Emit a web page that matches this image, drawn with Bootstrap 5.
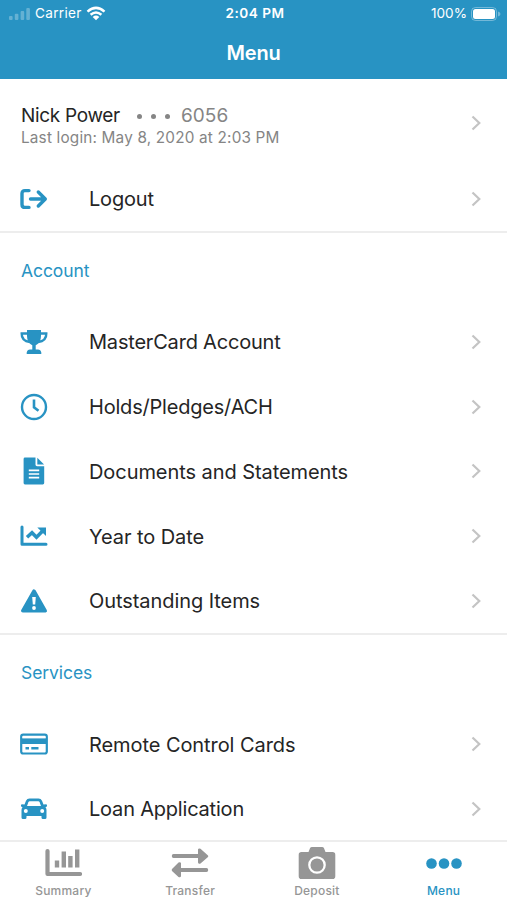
<!DOCTYPE html>
<html lang="en">
<head>
<meta charset="utf-8">
<meta name="viewport" content="width=device-width, initial-scale=1">
<title>Menu</title>
<link href="https://cdn.jsdelivr.net/npm/bootstrap@5.3.0/dist/css/bootstrap.min.css" rel="stylesheet">
<style>
:root{--brand:#2893c3}
body{font-family:Inter,"Liberation Sans",sans-serif;color:#252525;height:900px;width:507px;background:#fff}
svg{display:block;flex:none}
.brand-bg{background:var(--brand);color:#fff;height:79px}
.statusbar{height:27px;font-size:13.6px;line-height:27px;padding:0 6px 0 9px}
.statusbar>div{flex:1 1 0}
.carrier{letter-spacing:.3px}
.clock{font-weight:600;letter-spacing:.5px}
.screen-title{font-size:20px;font-weight:600;line-height:52px;letter-spacing:-.15px}
.row-item{height:64.8px;padding:0 26.5px 0 20px;font-size:20px;letter-spacing:-.2px;color:inherit;text-decoration:none}
.row-item .glyph{width:69px;color:var(--brand)}
.row-item .label{padding-top:1px}
.row-item .wide{letter-spacing:-.07px}
.profile{height:87px;padding-left:21px}
.logout{height:65px}
.user{font-size:19px;line-height:22px;letter-spacing:-.32px;margin-top:7px}
.muted{color:#858585}
.acct{letter-spacing:.1px}
.login-time{font-size:15.3px;line-height:21px;color:#858585;letter-spacing:.19px}
.dots{gap:9px;margin:2px 11px 0 17px}
.dots i{width:5px;height:5px;border-radius:50%;background:#858585}
.group{border-bottom:2.5px solid #ededed}
.group-title{height:76.4px;line-height:76px;padding-left:21px;font-size:17.5px;letter-spacing:-.08px;color:var(--brand)}
.tabs{height:60px;border-top:2px solid #ededed;background:#fff}
.tabs a{flex:1 1 0;color:#969696;text-decoration:none;font-size:12px;font-weight:500;line-height:16px;letter-spacing:.22px;padding-top:1px}
.tabs a.on{color:var(--brand)}
</style>
</head>
<body class="d-flex flex-column overflow-hidden">
<svg width="0" height="0" class="position-absolute"><symbol id="chev" viewBox="0 0 10 16"><path d="M1.5 1.5L8.3 8L1.5 14.5" fill="none" stroke="#c4c4c4" stroke-width="2.2"/></symbol></svg>
<header class="brand-bg flex-shrink-0">
  <div class="statusbar d-flex align-items-center">
    <div class="d-flex align-items-center">
      <svg width="22" height="14" viewBox="0 0 22 14" fill="#fff" opacity=".28"><rect y="9" width="3.6" height="4" rx="1"/><rect x="5.8" y="6.8" width="3.6" height="6.2" rx="1"/><rect x="11.6" y="4" width="3.6" height="9" rx="1"/><rect x="17.3" y="1" width="3.6" height="12" rx="1"/></svg>
      <span class="carrier ms-1">Carrier</span>
      <svg class="ms-1" width="20" height="15" viewBox="0 0 20 15"><g fill="none" stroke="#fff" stroke-width="2.5"><path d="M1.5 5.6Q10 -1.9 18.5 5.6"/><path d="M4.6 8.8Q10 4.1 15.4 8.8"/></g><path d="M6.7 10.9Q10 8.1 13.3 10.9L10 14.3Z" fill="#fff"/></svg>
    </div>
    <div class="clock text-center">2:04 PM</div>
    <div class="d-flex align-items-center justify-content-end">
      <span>100%</span>
      <svg class="ms-1" width="30" height="14" viewBox="0 0 30 14"><rect x=".5" y=".5" width="25" height="13" rx="4" fill="none" stroke="#fff" opacity=".35"/><rect x="2" y="2" width="22" height="10" rx="2.5" fill="#fff"/><path d="M27 4.6Q29.5 5.3 29.5 7T27 9.4Z" fill="#fff" opacity=".35"/></svg>
    </div>
  </div>
  <h1 class="screen-title text-center m-0">Menu</h1>
</header>
<main class="flex-grow-1 overflow-hidden">
  <section class="group">
    <a href="#" class="row-item profile d-flex align-items-center justify-content-between">
      <div>
        <div class="user d-flex align-items-center"><span>Nick Power</span><span class="dots d-flex"><i></i><i></i><i></i></span><span class="muted acct">6056</span></div>
        <div class="login-time">Last login: May 8, 2020 at 2:03 PM</div>
      </div>
      <svg width="10" height="16"><use href="#chev"/></svg>
    </a>
    <a href="#" class="row-item logout d-flex align-items-center">
      <span class="glyph"><svg width="28" height="28" viewBox="0 0 28 28" fill="none" stroke="currentColor" stroke-width="3.4" stroke-linecap="round" stroke-linejoin="round"><path d="M9 5.6H5Q2 5.6 2 8.600V19.400Q2 22.400 5 22.400H9"/><path d="M10.500 14H25M18.300 7L25.300 14L18.300 21"/></svg></span>
      <span class="label flex-grow-1">Logout</span><svg width="10" height="16"><use href="#chev"/></svg>
    </a>
  </section>
  <section class="group">
    <h2 class="group-title m-0 fw-normal">Account</h2>
    <a href="#" class="row-item d-flex align-items-center">
      <span class="glyph"><svg width="28" height="28" viewBox="0 0 28 28"><path d="M7 2H21V8Q21 14.5 15.7 17.2V21.5H18Q20.7 21.5 21.3 24.5V26H6.7V24.5Q7.3 21.5 10 21.5H12.3V17.2Q7 14.5 7 8Z" fill="currentColor"/><path d="M7.5 5.5H1.7Q1.4 13 10 14M20.5 5.5H26.3Q26.6 13 18 14" fill="none" stroke="currentColor" stroke-width="2.4"/></svg></span>
      <span class="label flex-grow-1">MasterCard Account</span><svg width="10" height="16"><use href="#chev"/></svg>
    </a>
    <a href="#" class="row-item d-flex align-items-center">
      <span class="glyph"><svg width="28" height="28" viewBox="0 0 28 28" fill="none" stroke="currentColor" stroke-width="2.4"><circle cx="14" cy="14" r="12"/><path d="M14 6.5V14.4L18.5 17.8" stroke-width="2.6"/></svg></span>
      <span class="label flex-grow-1">Holds/Pledges/ACH</span><svg width="10" height="16"><use href="#chev"/></svg>
    </a>
    <a href="#" class="row-item d-flex align-items-center">
      <span class="glyph"><svg width="28" height="28" viewBox="0 0 28 28" fill="currentColor"><path d="M5 .6H15.5V7.8Q15.5 9.2 17 9.2H24.2V26Q24.2 27.4 22.8 27.4H5Q3.6 27.4 3.6 26V2Q3.6 .6 5 .6Z"/><path d="M17.3 .7L24.1 7.5H17.3Z"/><path d="M8.8 13.3H19.2M8.8 17H19.2M8.8 20.7H19.2" stroke="#fff" stroke-width="1.7"/></svg></span>
      <span class="label wide flex-grow-1">Documents and Statements</span><svg width="10" height="16"><use href="#chev"/></svg>
    </a>
    <a href="#" class="row-item d-flex align-items-center">
      <span class="glyph"><svg width="28" height="28" viewBox="0 0 28 28" fill="none" stroke="currentColor" stroke-width="3" stroke-linecap="round"><path d="M2 5V22.2H26" stroke-linejoin="round"/><path d="M7 15.2L12 10.7L16.5 15.2L22.6 9" stroke-width="3.5" stroke-linecap="butt"/><path d="M17.3 5.400H26V14Z" fill="currentColor" stroke="none"/></svg></span>
      <span class="label wide flex-grow-1">Year to Date</span><svg width="10" height="16"><use href="#chev"/></svg>
    </a>
    <a href="#" class="row-item d-flex align-items-center">
      <span class="glyph"><svg width="28" height="28" viewBox="0 0 28 28"><path d="M14 4.2L25.2 23.8H2.8Z" fill="currentColor" stroke="currentColor" stroke-width="3.6" stroke-linejoin="round"/><path d="M12.2 10H15.8L15.2 17.5H12.8Z" fill="#fff"/><circle cx="14" cy="21" r="1.9" fill="#fff"/></svg></span>
      <span class="label wide flex-grow-1">Outstanding Items</span><svg width="10" height="16"><use href="#chev"/></svg>
    </a>
  </section>
  <section>
    <h2 class="group-title m-0 fw-normal">Services</h2>
    <a href="#" class="row-item d-flex align-items-center">
      <span class="glyph"><svg width="28" height="28" viewBox="0 0 28 28"><rect x="1.2" y="4.7" width="25.6" height="18.8" rx="2" fill="none" stroke="currentColor" stroke-width="2.2"/><path d="M2 8.4H26V14H2Z" fill="currentColor"/><path d="M2 7.2H26" stroke="#fff" stroke-width="1" opacity=".55"/><path d="M5.5 18.3H9M11.3 18.3H18.5" stroke="currentColor" stroke-width="2.4"/></svg></span>
      <span class="label wide flex-grow-1">Remote Control Cards</span><svg width="10" height="16"><use href="#chev"/></svg>
    </a>
    <a href="#" class="row-item d-flex align-items-center">
      <span class="glyph"><svg width="28" height="28" viewBox="0 0 28 28"><path d="M9.5 3.5H18.5Q21 3.5 22 5.8L23.5 9.6L26.2 9.3Q27.6 9.6 26.9 11.5L25.5 12.2Q26.5 13.3 26.5 15V22.5Q26.5 24 25 24H23Q21.5 24 21.5 22.5V21H6.5V22.5Q6.5 24 5 24H3Q1.5 24 1.5 22.5V15Q1.5 13.3 2.5 12.2L1.1 11.5Q.4 9.6 1.8 9.3L4.5 9.6L6 5.8Q7 3.5 9.5 3.5Z" fill="currentColor"/><path d="M9.6 6.3H18.4Q19.2 6.3 19.6 7.2L21 11H7L8.4 7.2Q8.8 6.3 9.6 6.3Z" fill="#fff"/><circle cx="5.8" cy="16" r="2" fill="#fff"/><circle cx="22.2" cy="16" r="2" fill="#fff"/></svg></span>
      <span class="label flex-grow-1">Loan Application</span><svg width="10" height="16"><use href="#chev"/></svg>
    </a>
  </section>
</main>
<nav class="tabs d-flex flex-shrink-0">
  <a href="#" class="d-flex flex-column align-items-center"><svg width="38" height="40" viewBox="0 0 38 40" fill="none" stroke="currentColor"><path d="M3.500 8V31H36" stroke-width="4.200" stroke-linecap="round" stroke-linejoin="round"/><path d="M13 17.500V24.500M19.800 8.500V24.500M26.400 13V24.500M33.200 6.500V24.500" stroke-width="4.400"/></svg>Summary</a>
  <a href="#" class="d-flex flex-column align-items-center"><svg width="38" height="40" viewBox="0 0 38 40" fill="currentColor"><path d="M2.5 11H27V6.5Q27.5 4.8 29.5 5.8L37 12.5Q37.6 13.2 37 14L29.5 20.5Q27.5 21.5 27 19.6V15H2.5Q.8 14.8 .8 13T2.5 11Z"/><path d="M35.5 25H10V20Q9.5 18.6 7.5 19.5L1 26Q.4 27 1 28L7.5 34Q9.5 35 10 33.2V29H35.5Q37.2 28.8 37.2 27T35.5 25Z"/></svg>Transfer</a>
  <a href="#" class="d-flex flex-column align-items-center"><svg width="38" height="40" viewBox="0 0 38 40"><path d="M3.5 9H10.5L12 5.3Q12.5 4 14 4H24Q25.500 4 26 5.3L27.500 9H34.500Q37.300 9 37.300 11.800V33.200Q37.300 36 34.500 36H3.500Q.7 36 .7 33.200V11.800Q.7 9 3.500 9Z" fill="currentColor"/><circle cx="19" cy="22" r="7.700" fill="none" stroke="#fff" stroke-width="2.300"/></svg>Deposit</a>
  <a href="#" class="on d-flex flex-column align-items-center"><svg width="38" height="40" viewBox="0 0 38 40" fill="currentColor"><circle cx="6.500" cy="20.500" r="5.300"/><circle cx="19" cy="20.500" r="5.300"/><circle cx="31.500" cy="20.500" r="5.300"/></svg>Menu</a>
</nav>
<script src="https://cdn.jsdelivr.net/npm/bootstrap@5.3.0/dist/js/bootstrap.bundle.min.js"></script>
</body>
</html>
